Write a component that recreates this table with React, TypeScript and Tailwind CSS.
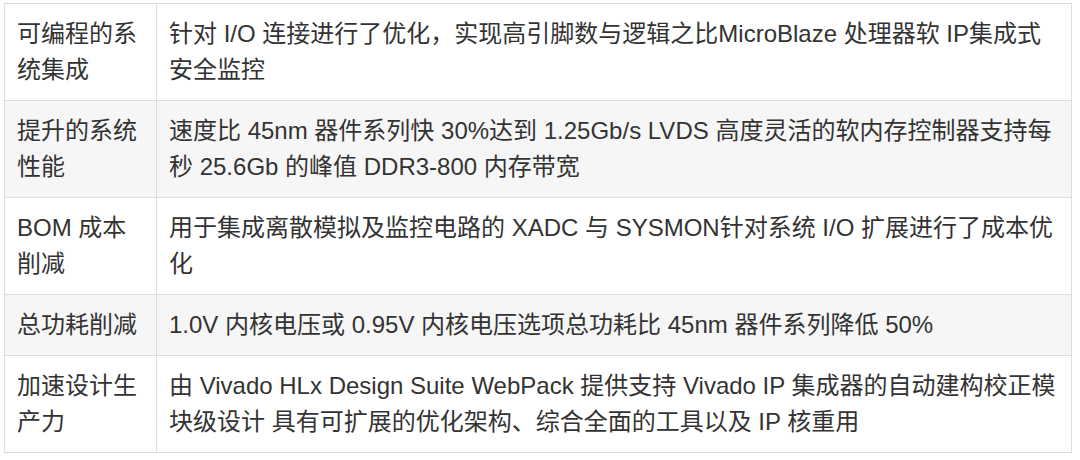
const rows = [
  {
    label: "可编程的系统集成",
    text: "针对 I/O 连接进行了优化，实现高引脚数与逻辑之比MicroBlaze 处理器软 IP集成式安全监控",
  },
  {
    label: "提升的系统性能",
    text: "速度比 45nm 器件系列快 30%达到 1.25Gb/s LVDS 高度灵活的软内存控制器支持每秒 25.6Gb 的峰值 DDR3-800 内存带宽",
  },
  {
    label: "BOM 成本削减",
    text: "用于集成离散模拟及监控电路的 XADC 与 SYSMON针对系统 I/O 扩展进行了成本优化",
  },
  {
    label: "总功耗削减",
    text: "1.0V 内核电压或 0.95V 内核电压选项总功耗比 45nm 器件系列降低 50%",
  },
  {
    label: "加速设计生产力",
    text: "由 Vivado HLx Design Suite WebPack 提供支持 Vivado IP 集成器的自动建构校正模块级设计 具有可扩展的优化架构、综合全面的工具以及 IP 核重用",
  },
];

export default function App() {
  return (
    <div className="w-[1080px] h-[460px] bg-white pt-[3px] pl-[4px] font-['Liberation_Sans','Noto_Sans_CJK_SC',sans-serif] text-[#333]">
      <table className="w-[1068px] border-collapse border border-[#ddd] text-[24px] leading-[36px]">
        <tbody>
          {rows.map((row, idx) => (
            <tr key={row.label} className={idx % 2 === 1 ? "bg-[#f6f6f6]" : "bg-white"}>
              <td className="w-[152px] border border-[#ddd] p-[12px] align-top">{row.label}</td>
              <td className="border border-[#ddd] p-[12px] align-top">{row.text}</td>
            </tr>
          ))}
        </tbody>
      </table>
    </div>
  );
}
